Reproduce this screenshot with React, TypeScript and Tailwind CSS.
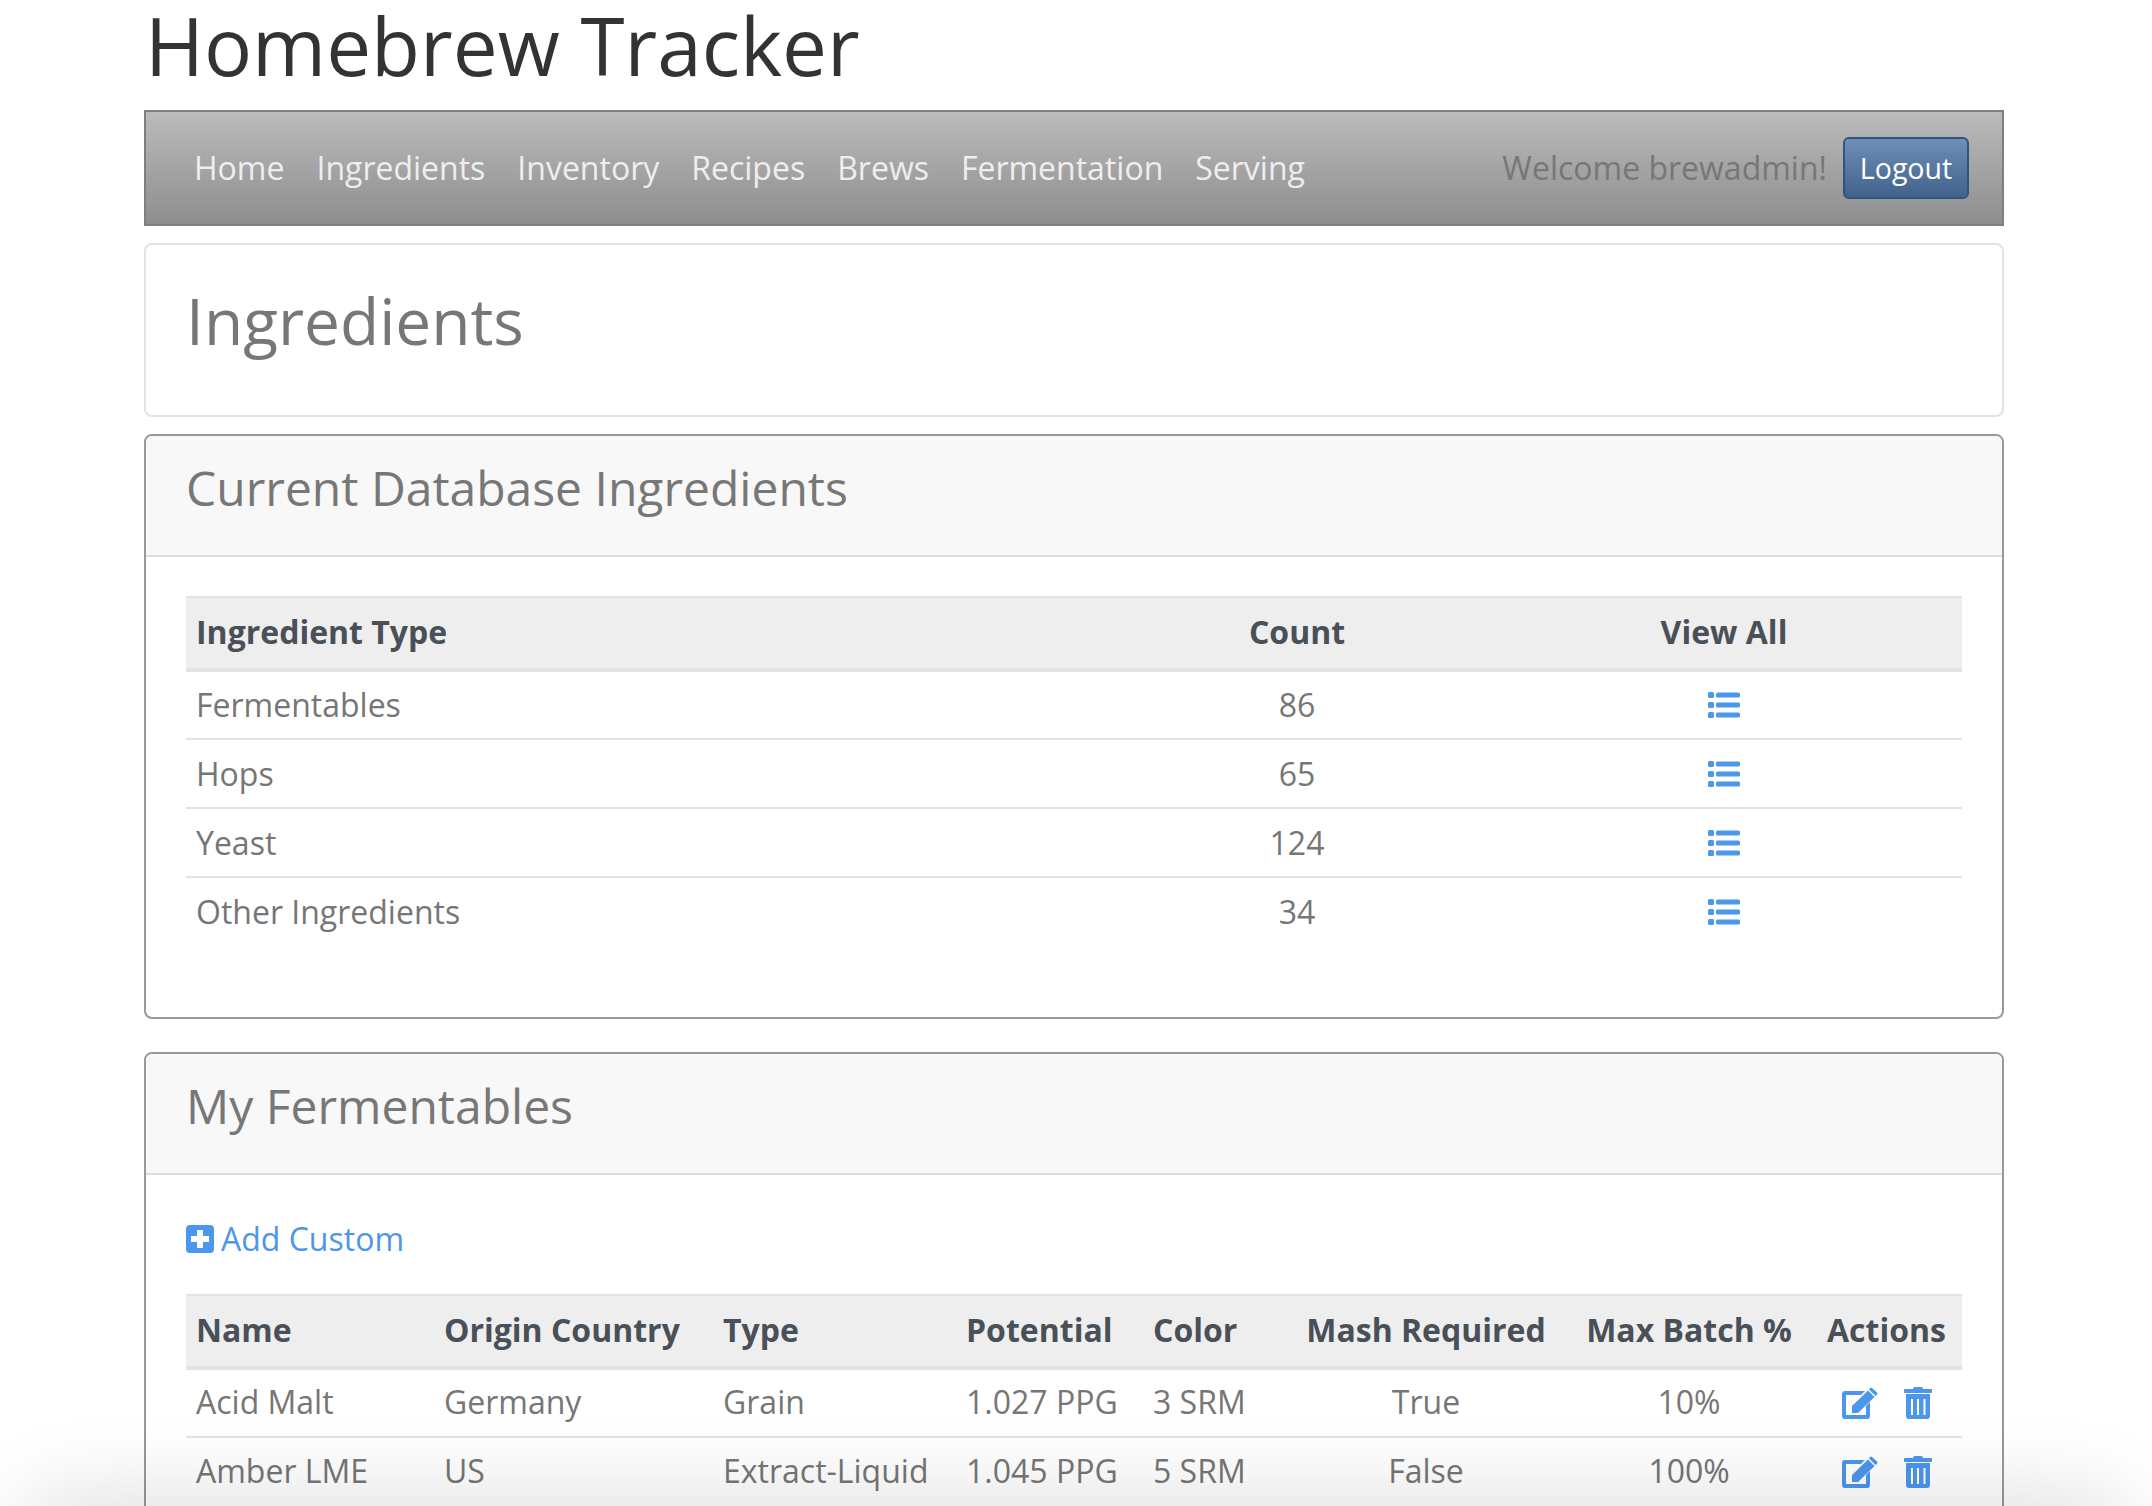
import React from "react";

const ingredientRows = [
  { type: "Fermentables", count: 86 },
  { type: "Hops", count: 65 },
  { type: "Yeast", count: 124 },
  { type: "Other Ingredients", count: 34 },
];

const fermentables = [
  { name: "Acid Malt", origin: "Germany", type: "Grain", potential: "1.027 PPG", color: "3 SRM", mash: "True", max: "10%" },
  { name: "Amber LME", origin: "US", type: "Extract-Liquid", potential: "1.045 PPG", color: "5 SRM", mash: "False", max: "100%" },
];

const navLinks = ["Home", "Ingredients", "Inventory", "Recipes", "Brews", "Fermentation", "Serving"];

function ListIcon() {
  return (
    <svg viewBox="0 0 32 26" className="mx-auto w-[32px] h-[26px] fill-[#4c96ec]">
      <rect x="0" y="0" width="6" height="6" rx="1.5" />
      <rect x="8" y="0.5" width="24" height="5" rx="1.5" />
      <rect x="0" y="10" width="6" height="6" rx="1.5" />
      <rect x="8" y="10.5" width="24" height="5" rx="1.5" />
      <rect x="0" y="20" width="6" height="6" rx="1.5" />
      <rect x="8" y="20.5" width="24" height="5" rx="1.5" />
    </svg>
  );
}

function PlusSquareIcon() {
  return (
    <svg viewBox="0 0 28 28" className="w-[28px] h-[28px] fill-[#4c96ec]">
      <path
        fillRule="evenodd"
        d="M4 0h20a4 4 0 0 1 4 4v20a4 4 0 0 1-4 4H4a4 4 0 0 1-4-4V4a4 4 0 0 1 4-4zM11 5v6H5v6h6v6h6v-6h6v-6h-6V5z"
      />
    </svg>
  );
}

function EditIcon() {
  return (
    <svg viewBox="0 0 36 32" className="w-[36px] h-[32px] fill-[#4c96ec]">
      <path d="M3 4h20l-4 4H4v20h20V19l4-4v14a3 3 0 0 1-3 3H3a3 3 0 0 1-3-3V7a3 3 0 0 1 3-3z" />
      <path d="M10 19 26 3.5l6.500 6.500L16 26H10z" />
      <path d="M28 1a1.500 1.500 0 0 1 2 0l5 4.500a1.500 1.500 0 0 1 0 2L33.500 9 27 2.500z" />
    </svg>
  );
}

function TrashIcon() {
  return (
    <svg viewBox="0 0 28 32" className="w-[28px] h-[32px] fill-[#4c96ec]">
      <path d="M9 2a2 2 0 0 1 2-2h6a2 2 0 0 1 2 2h8a1 1 0 0 1 1 1v2a1 1 0 0 1-1 1H1a1 1 0 0 1-1-1V3a1 1 0 0 1 1-1z" />
      <path
        fillRule="evenodd"
        d="M2 7h24v22a3 3 0 0 1-3 3H5a3 3 0 0 1-3-3zM7 12v16h2V12zM13 12v16h2V12zM19.500 12v16h2V12z"
      />
    </svg>
  );
}

function Panel({ title, children }: { title: string; children: React.ReactNode }) {
  return (
    <div className="border-2 border-[#999999] rounded-[8px] overflow-hidden bg-white">
      <div className="h-[121px] bg-[#f8f8f8] border-b-2 border-[#dddddd] pl-[40px] flex items-center">
        <h2 className="text-[48px] text-[#777777] pb-[16px]">{title}</h2>
      </div>
      {children}
    </div>
  );
}

export default function App() {
  return (
    <div
      className="relative h-[1506px] overflow-hidden bg-white text-[#767676] text-[32px]"
      style={{ fontFamily: '"Open Sans", sans-serif' }}
    >
      <div className="ml-[144px] mr-[148px]">
        <h1 className="h-[110px] text-[80px] leading-[90px] text-[#333333] pl-[1px]">Homebrew Tracker</h1>

        <nav className="h-[116px] border-2 border-[#7f7f7f] bg-gradient-to-b from-[#bbbbbb] to-[#8e8e8e] flex items-center justify-between pl-[48px] pr-[33px]">
          <div className="flex gap-[32px] text-[#eeeeee]">
            {navLinks.map((link) => (
              <a key={link}>{link}</a>
            ))}
          </div>
          <div className="flex items-center gap-[16px]">
            <span className="text-[#777777]">Welcome brewadmin!</span>
            <button className="w-[126px] h-[62px] rounded-[6px] border-2 border-[#2e5480] bg-gradient-to-b from-[#6d8fb8] to-[#41628b] text-white text-[28.500px]">
              Logout
            </button>
          </div>
        </nav>

        <div className="mt-[17px] h-[174px] border-2 border-[#e2e2e2] rounded-[8px] pl-[40px] flex items-center">
          <h1 className="text-[64px] text-[#777777] pb-[18px]">Ingredients</h1>
        </div>

        <div className="mt-[17px]">
          <Panel title="Current Database Ingredients">
            <div className="px-[40px] pt-[39px] h-[460px]">
              <table className="w-full table-fixed border-collapse">
                <colgroup>
                  <col className="w-[922px]" />
                  <col className="w-[378px]" />
                  <col />
                </colgroup>
                <thead>
                  <tr className="h-[73px] bg-[#eeeeee] border-t-2 border-b-4 border-[#e0e3e7] font-bold text-[#495057]">
                    <th className="text-left pl-[10px] pb-[2px]">Ingredient Type</th>
                    <th className="text-center pb-[2px]">Count</th>
                    <th className="text-center pb-[2px]">View All</th>
                  </tr>
                </thead>
                <tbody>
                  {ingredientRows.map((row) => (
                    <tr key={row.type} className="h-[69px] border-b-2 last:border-b-0 border-[#e0e3e7]">
                      <td className="pl-[10px]">{row.type}</td>
                      <td className="text-center">{row.count}</td>
                      <td>
                        <ListIcon />
                      </td>
                    </tr>
                  ))}
                </tbody>
              </table>
            </div>
          </Panel>
        </div>

        <div className="mt-[33px]">
          <Panel title="My Fermentables">
            <div className="px-[40px] pt-[41px] pb-[40px]">
              <a className="flex items-center gap-[7px] h-[46px] mb-[32px] text-[#4c96ec]">
                <PlusSquareIcon />
                Add Custom
              </a>
              <table className="w-full table-fixed border-collapse">
                <colgroup>
                  <col className="w-[248px]" />
                  <col className="w-[279px]" />
                  <col className="w-[243px]" />
                  <col className="w-[187px]" />
                  <col className="w-[148px]" />
                  <col className="w-[270px]" />
                  <col className="w-[256px]" />
                  <col />
                </colgroup>
                <thead>
                  <tr className="h-[73px] bg-[#eeeeee] border-t-2 border-b-4 border-[#e0e3e7] font-bold text-[#495057]">
                    <th className="text-left pl-[10px] pb-[2px]">Name</th>
                    <th className="text-left pl-[10px] pb-[2px]">Origin Country</th>
                    <th className="text-left pl-[10px] pb-[2px]">Type</th>
                    <th className="text-left pl-[10px] pb-[2px]">Potential</th>
                    <th className="text-left pl-[10px] pb-[2px]">Color</th>
                    <th className="text-center pb-[2px]">Mash Required</th>
                    <th className="text-center pb-[2px]">Max Batch %</th>
                    <th className="text-left pl-[10px] pb-[2px]">Actions</th>
                  </tr>
                </thead>
                <tbody>
                  {fermentables.map((row) => (
                    <tr key={row.name} className="h-[69px] border-b-2 last:border-b-0 border-[#e0e3e7]">
                      <td className="pl-[10px] pb-[2px]">{row.name}</td>
                      <td className="pl-[10px] pb-[2px]">{row.origin}</td>
                      <td className="pl-[10px] pb-[2px]">{row.type}</td>
                      <td className="pl-[10px] pb-[2px]">{row.potential}</td>
                      <td className="pl-[10px] pb-[2px]">{row.color}</td>
                      <td className="text-center pb-[2px]">{row.mash}</td>
                      <td className="text-center pb-[2px]">{row.max}</td>
                      <td>
                        <div className="flex items-center gap-[26px] pl-[25px]">
                          <EditIcon />
                          <TrashIcon />
                        </div>
                      </td>
                    </tr>
                  ))}
                </tbody>
              </table>
            </div>
          </Panel>
        </div>
      </div>

      {/* soft shadow rising from the bottom edge */}
      <div className="absolute left-[60px] right-[60px] top-[1530px] h-[40px] shadow-[0_0_90px_30px_rgba(0,0,0,0.14)]" />
    </div>
  );
}
